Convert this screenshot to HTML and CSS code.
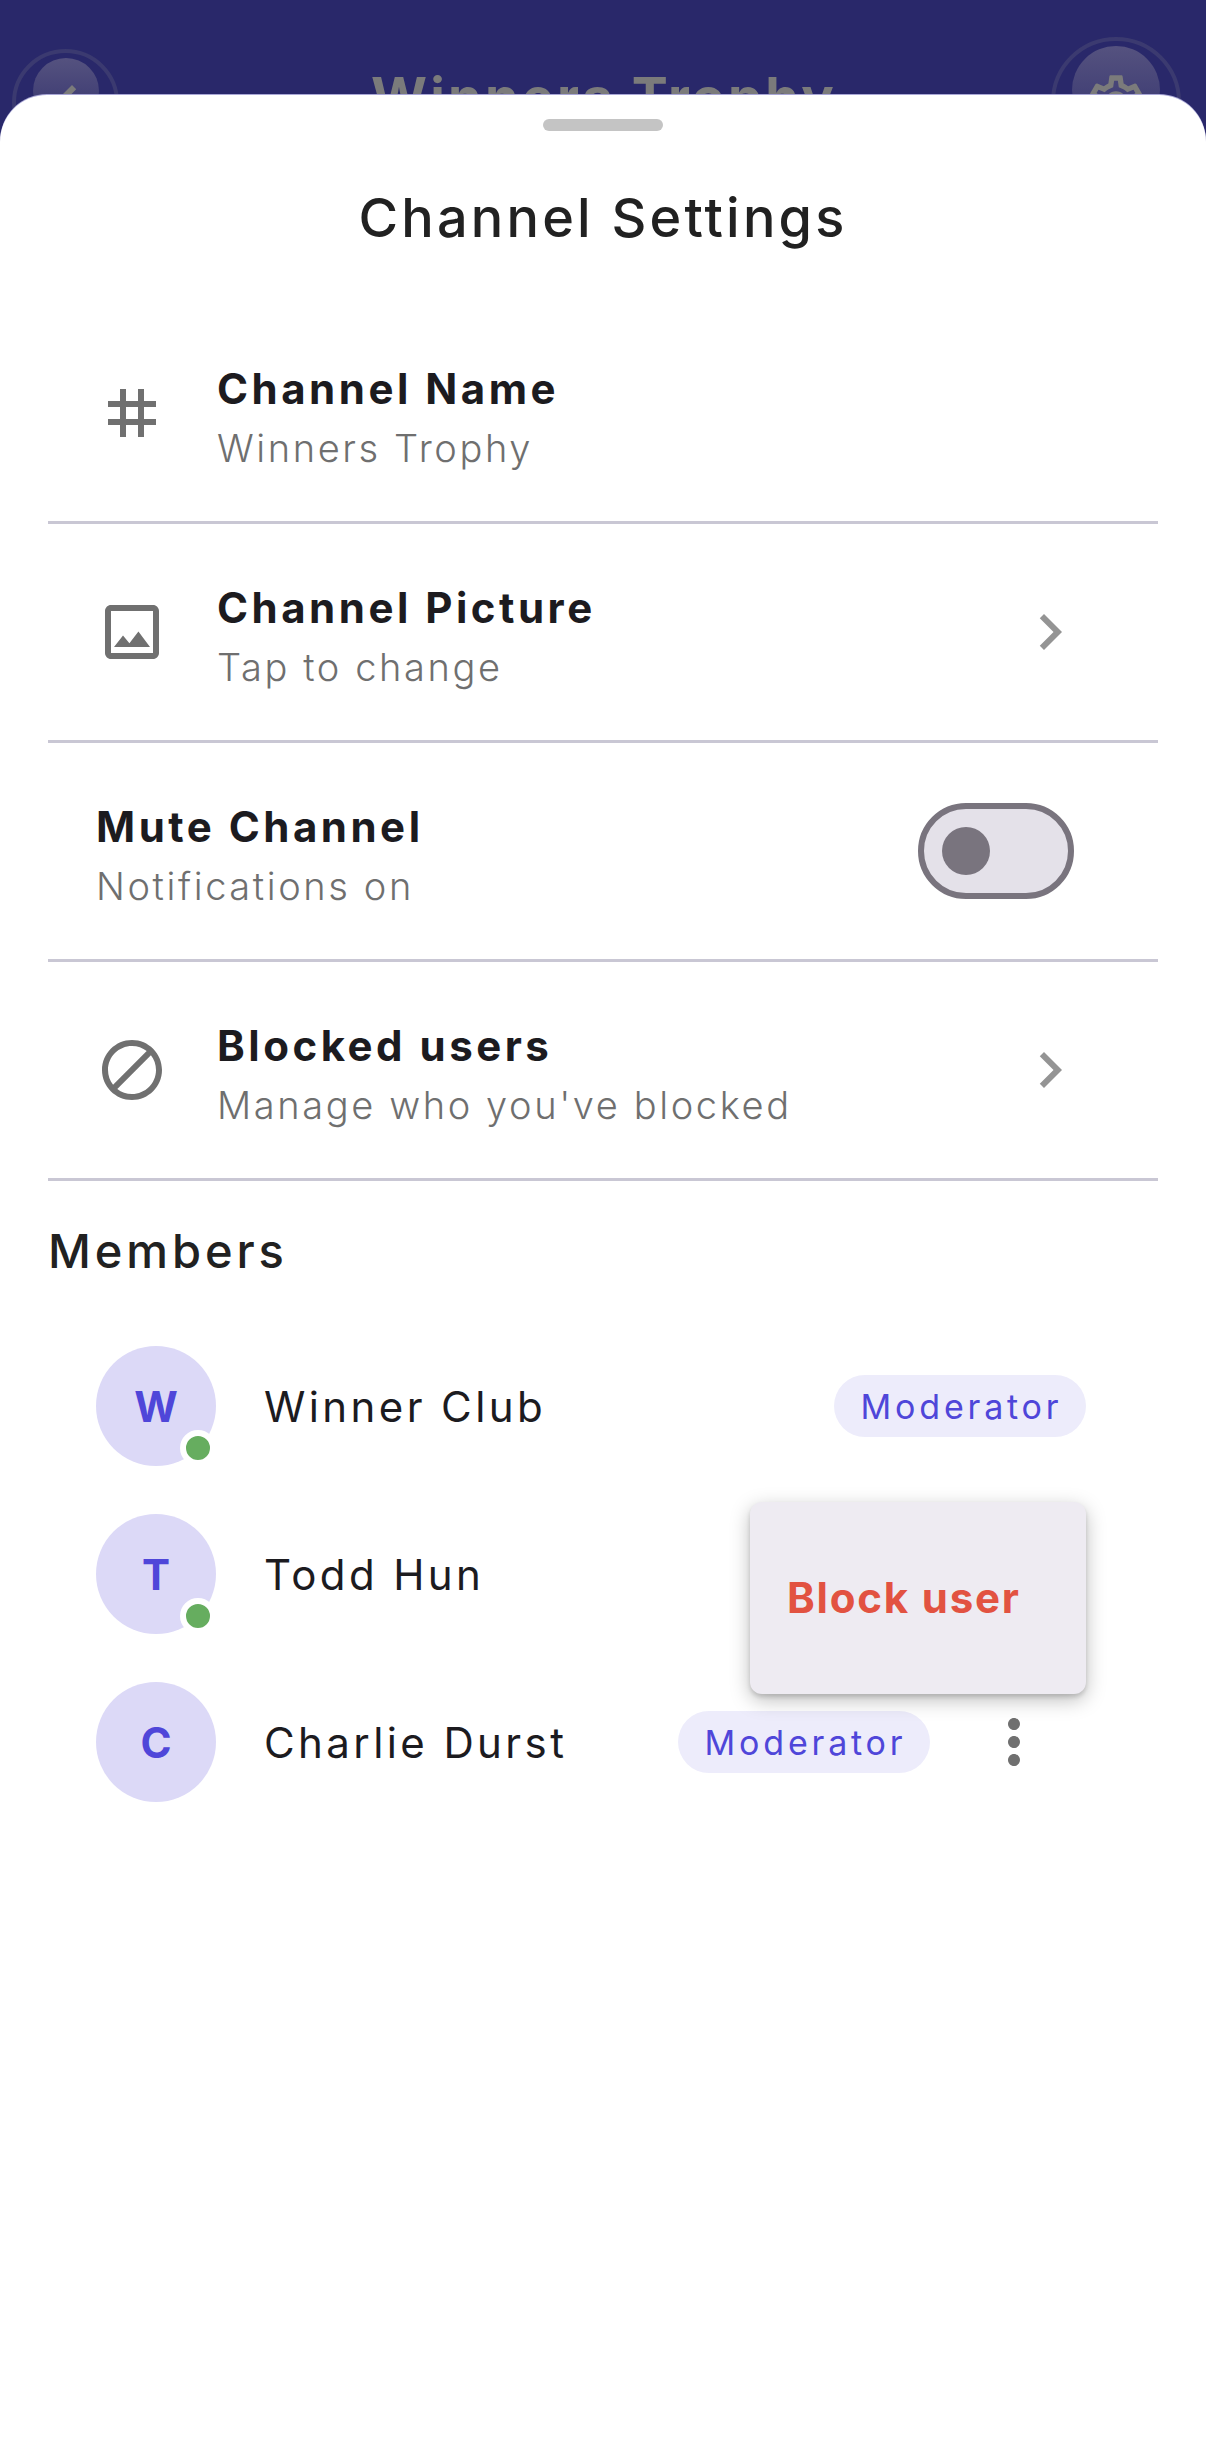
FILE: index.html
```html
<!DOCTYPE html>
<html lang="en">
<head>
  <meta charset="UTF-8">
  <title>Channel Settings</title>
  <link rel="stylesheet" href="styles.css">
</head>
<body>

<!-- channel header, dimmed behind the sheet -->
<div class="topbar">
  <div class="round-btn back-btn">
    <div class="disc"></div>
    <svg class="btn-icon" viewBox="0 0 24 24" width="72" height="72"><path d="M15.41 7.41L14 6l-6 6 6 6 1.41-1.41L10.83 12z"/></svg>
  </div>
  <div class="topbar-title">Winners Trophy</div>
  <div class="round-btn gear-btn">
    <div class="disc"></div>
    <svg class="btn-icon" viewBox="0 0 24 24" width="64" height="64"><path d="M19.43 12.98c.04-.32.07-.64.07-.98 0-.34-.03-.66-.07-.98l2.11-1.65c.19-.15.24-.42.12-.64l-2-3.46c-.09-.16-.26-.25-.44-.25-.06 0-.12.01-.17.03l-2.49 1c-.52-.4-1.08-.73-1.69-.98l-.38-2.65C14.46 2.18 14.25 2 14 2h-4c-.25 0-.46.18-.49.42l-.38 2.65c-.61.25-1.17.59-1.69.98l-2.49-1c-.06-.02-.12-.03-.18-.03-.17 0-.34.09-.43.25l-2 3.46c-.13.22-.07.49.12.64l2.11 1.65c-.04.32-.07.65-.07.98 0 .33.03.66.07.98l-2.11 1.65c-.19.15-.24.42-.12.64l2 3.46c.09.16.26.25.44.25.06 0 .12-.01.17-.03l2.49-1c.52.4 1.08.73 1.69.98l.38 2.65c.03.24.24.42.49.42h4c.25 0 .46-.18.49-.42l.38-2.65c.61-.25 1.17-.59 1.69-.98l2.49 1c.06.02.12.03.18.03.17 0 .34-.09.43-.25l2-3.46c.12-.22.07-.49-.12-.64l-2.11-1.65zm-1.98-1.71c.04.31.05.52.05.73 0 .21-.02.43-.05.73l-.14 1.13.89.7 1.08.84-.7 1.21-1.27-.51-1.04-.42-.9.68c-.43.32-.84.56-1.25.73l-1.06.43-.16 1.13-.2 1.35h-1.4l-.19-1.35-.16-1.13-1.06-.43c-.43-.18-.83-.41-1.23-.71l-.91-.7-1.06.43-1.27.51-.7-1.21 1.08-.84.89-.7-.14-1.13c-.03-.31-.05-.54-.05-.74s.02-.43.05-.73l.14-1.13-.89-.7-1.08-.84.7-1.21 1.27.51 1.04.42.9-.68c.43-.32.84-.56 1.25-.73l1.06-.43.16-1.13.2-1.35h1.39l.19 1.35.16 1.13 1.06.43c.43.18.83.41 1.23.71l.91.7 1.06-.43 1.27-.51.7 1.21-1.07.85-.89.7.14 1.13zM12 8c-2.21 0-4 1.79-4 4s1.79 4 4 4 4-1.79 4-4-1.79-4-4-4zm0 6c-1.1 0-2-.9-2-2s.9-2 2-2 2 .9 2 2-.9 2-2 2z"/></svg>
  </div>
</div>

<div class="sheet">
  <div class="handle"></div>
  <h1 class="sheet-title">Channel Settings</h1>

  <div class="settings">
    <div class="row">
      <div class="row-icon">
        <svg viewBox="0 0 24 24" width="72" height="72"><path d="M20 10V8h-4V4h-2v4h-4V4H8v4H4v2h4v4H4v2h4v4h2v-4h4v4h2v-4h4v-2h-4v-4h4zm-6 4h-4v-4h4v4z"/></svg>
      </div>
      <div class="row-text">
        <div class="row-name">Channel Name</div>
        <div class="row-sub">Winners Trophy</div>
      </div>
    </div>

    <div class="row">
      <div class="row-icon">
        <svg viewBox="0 0 24 24" width="72" height="72"><path d="M19 5v14H5V5h14m0-2H5c-1.1 0-2 .9-2 2v14c0 1.1.9 2 2 2h14c1.1 0 2-.9 2-2V5c0-1.1-.9-2-2-2zm-4.86 8.86l-3 3.87L9 13.14 6 17h12l-3.86-5.14z"/></svg>
      </div>
      <div class="row-text">
        <div class="row-name">Channel Picture</div>
        <div class="row-sub">Tap to change</div>
      </div>
      <svg class="chevron" viewBox="0 0 24 24" width="72" height="72"><path d="M10 6L8.59 7.41 13.17 12l-4.58 4.59L10 18l6-6z"/></svg>
    </div>

    <div class="row">
      <div class="row-text">
        <div class="row-name">Mute Channel</div>
        <div class="row-sub">Notifications on</div>
      </div>
      <div class="switch"><div class="thumb"></div></div>
    </div>

    <div class="row">
      <div class="row-icon">
        <svg viewBox="0 0 24 24" width="72" height="72"><path d="M12 2C6.48 2 2 6.48 2 12s4.48 10 10 10 10-4.48 10-10S17.52 2 12 2zM4 12c0-4.42 3.58-8 8-8 1.85 0 3.55.63 4.9 1.69L5.69 16.9C4.63 15.55 4 13.85 4 12zm8 8c-1.85 0-3.55-.63-4.9-1.69L18.31 7.1C19.37 8.45 20 10.15 20 12c0 4.42-3.58 8-8 8z"/></svg>
      </div>
      <div class="row-text">
        <div class="row-name">Blocked users</div>
        <div class="row-sub">Manage who you've blocked</div>
      </div>
      <svg class="chevron" viewBox="0 0 24 24" width="72" height="72"><path d="M10 6L8.59 7.41 13.17 12l-4.58 4.59L10 18l6-6z"/></svg>
    </div>
  </div>

  <h2 class="members-title">Members</h2>

  <div class="members">
    <div class="member">
      <div class="avatar">W<span class="online"></span></div>
      <div class="member-name">Winner Club</div>
      <div class="chip">Moderator</div>
    </div>

    <div class="member">
      <div class="avatar">T<span class="online"></span></div>
      <div class="member-name">Todd Hun</div>
      <!-- menu opened from this row -->
      <div class="popup">Block user</div>
    </div>

    <div class="member">
      <div class="avatar">C</div>
      <div class="member-name">Charlie Durst</div>
      <div class="chip">Moderator</div>
      <svg class="kebab" viewBox="0 0 24 24" width="72" height="72"><path d="M12 8c1.1 0 2-.9 2-2s-.9-2-2-2-2 .9-2 2 .9 2 2 2zm0 2c-1.1 0-2 .9-2 2s.9 2 2 2 2-.9 2-2-.9-2-2-2zm0 6c-1.1 0-2 .9-2 2s.9 2 2 2 2-.9 2-2-.9-2-2-2z"/></svg>
    </div>
  </div>
</div>

</body>
</html>
```

FILE: styles.css
```css
* {
  box-sizing: border-box;
}

html, body {
  margin: 0;
  padding: 0;
  height: 2455px;
  overflow: hidden;
}

body {
  font-family: 'Inter', 'Liberation Sans', sans-serif;
  background: #29286a;
  position: relative;
}

.topbar {
  height: 200px;
  display: flex;
  justify-content: space-between;
  align-items: flex-start;
}

.round-btn {
  position: relative;
  flex-shrink: 0;
  border: 4px solid #3b3a70;
  border-radius: 50%;
  display: flex;
  justify-content: center;
  align-items: flex-start;
}

.back-btn {
  width: 107px;
  height: 107px;
  margin: 49px 0 0 12px;
}

.gear-btn {
  width: 130px;
  height: 130px;
  margin: 37px 25px 0 0;
}

.disc {
  margin-top: 5px;
  border-radius: 50%;
  background: linear-gradient(#55527f, #35346f);
}

.back-btn .disc {
  width: 66px;
  height: 66px;
}

.gear-btn .disc {
  width: 88px;
  height: 88px;
}

.btn-icon {
  position: absolute;
  top: 50%;
  left: 50%;
  transform: translate(-50%, -50%);
  fill: #7b7b7b;
}

.topbar-title {
  flex: 1;
  margin-top: 64px;
  padding-left: 38px;
  text-align: center;
  font-size: 54px;
  font-weight: 700;
  letter-spacing: 3.2px;
  color: #7b7b7b;
}

.sheet {
  position: absolute;
  top: 95px;
  left: 0;
  width: 1206px;
  height: 2360px;
  background: white;
  border-radius: 47px 47px 0 0;
  box-shadow: 0 -1px 0 #a9a7d6;
  padding: 24px 48px 0;
}

.handle {
  width: 120px;
  height: 12px;
  margin: 0 auto;
  border-radius: 6px;
  background: #c4c4c4;
}

.sheet-title {
  margin: 55px 0 0;
  font-size: 54px;
  line-height: 64px;
  font-weight: 500;
  letter-spacing: 3.2px;
  color: #212121;
  text-align: center;
}

.settings {
  margin-top: 55px;
}

.row {
  height: 219px;
  display: flex;
  align-items: center;
  border-bottom: 3px solid #c9c7d4;
  padding-left: 48px;
}

.row-icon {
  width: 72px;
  height: 72px;
  margin-right: 49px;
  fill: #707070;
}

.row-icon svg {
  display: block;
}

.row-text {
  flex: 1;
  padding-top: 10px;
}

.row-name {
  font-size: 42px;
  line-height: 50px;
  font-weight: 700;
  letter-spacing: 3.5px;
  color: #1c1b1f;
}

.row-sub {
  margin-top: 9px;
  font-size: 38px;
  line-height: 50px;
  font-weight: 300;
  letter-spacing: 2.6px;
  color: #6f6f6f;
}

.chevron {
  fill: #949494;
  margin-right: 72px;
}

.switch {
  width: 156px;
  height: 96px;
  margin-right: 84px;
  border: 6px solid #79747e;
  border-radius: 48px;
  background: #e4e1e9;
  display: flex;
  align-items: center;
  padding-left: 18px;
}

.thumb {
  width: 48px;
  height: 48px;
  border-radius: 50%;
  background: #79747e;
}

.members-title {
  margin: 42px 0 0;
  font-size: 47px;
  line-height: 56px;
  font-weight: 500;
  letter-spacing: 3.9px;
  color: #212121;
}

.members {
  margin-top: 67px;
  padding: 0 72px 0 48px;
  display: flex;
  flex-direction: column;
  gap: 48px;
}

.member {
  position: relative;
  height: 120px;
  display: flex;
  align-items: center;
}

.avatar {
  position: relative;
  width: 120px;
  height: 120px;
  flex-shrink: 0;
  margin-right: 48px;
  border-radius: 50%;
  background: #dcd9f7;
  color: #4f46d9;
  font-size: 42px;
  font-weight: 700;
  display: flex;
  justify-content: center;
  align-items: center;
}

.online {
  position: absolute;
  right: 0;
  bottom: 0;
  width: 36px;
  height: 36px;
  border: 6px solid white;
  border-radius: 50%;
  background: #66ad5f;
}

.member-name {
  flex: 1;
  font-size: 42px;
  letter-spacing: 3.4px;
  color: #1c1b1f;
}

.chip {
  width: 252px;
  height: 62px;
  padding-left: 3px;
  border-radius: 31px;
  background: #edecfb;
  color: #4f46d9;
  font-size: 34px;
  letter-spacing: 3.8px;
  display: flex;
  justify-content: center;
  align-items: center;
}

.kebab {
  fill: #707070;
  margin: 0 36px 0 48px;
}

.popup {
  position: absolute;
  top: -12px;
  right: 0;
  width: 336px;
  height: 192px;
  padding: 0 0 2px 37px;
  display: flex;
  align-items: center;
  border-radius: 12px;
  background: #eeebf2;
  box-shadow: 0 6px 20px rgba(0, 0, 0, 0.26), 0 3px 4px rgba(0, 0, 0, 0.14);
  color: #e25241;
  font-size: 42px;
  font-weight: 700;
  letter-spacing: 1.8px;
  z-index: 2;
}
```
